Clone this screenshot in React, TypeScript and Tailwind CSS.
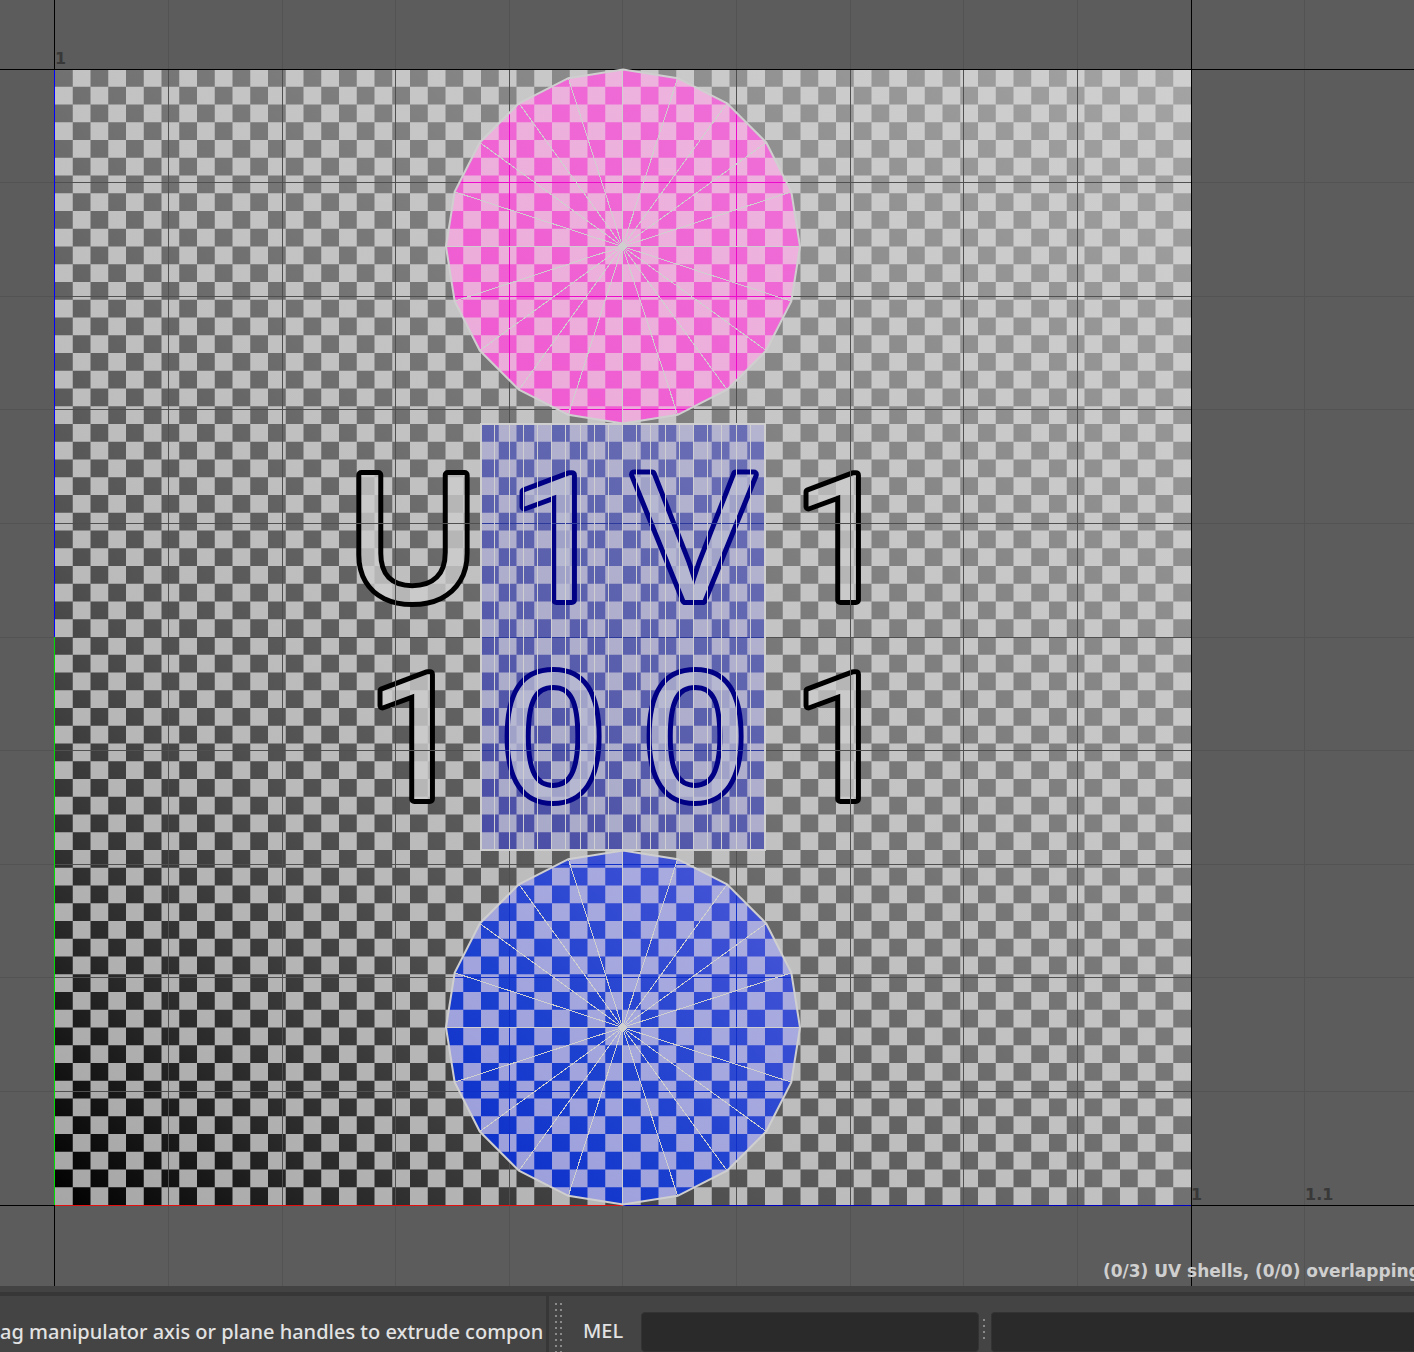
const LEFT = 55;
const TOP = 69;
const TILE = 1136;
const CELL = TILE / 64;

function checkerPath() {
  let d = '';
  for (let r = 0; r < 64; r++)
    for (let c = r % 2; c < 64; c += 2) {
      d += `M${LEFT + c * CELL} ${TOP + r * CELL}h${CELL}v${CELL}h${-CELL}z`;
    }
  return d;
}
const CHECKER = checkerPath();

const XS = Array.from({ length: 12 }, (_, i) => Math.floor(54.7 + i * 113.65) + 0.5);
const YS = Array.from({ length: 11 }, (_, i) => Math.floor(69.01 + i * 113.6) + 0.5);
const rows = YS.map((y) => `M0 ${y}H1414`).join('');
const gridLines = XS.map((x) => `M${x} 0V1286`).join('') + rows;

function ring(cx: number, cy: number, r: number) {
  return Array.from({ length: 20 }, (_, i) => {
    const a = (i * Math.PI) / 10;
    return [cx + r * Math.sin(a), cy - r * Math.cos(a)];
  });
}

// Brightness curve of the texture along its diagonal: [offset, weight].
const CURVE = [
  [0, 0],
  [0.05, 0.1],
  [0.128, 0.25],
  [0.29, 0.49],
  [0.5, 0.69],
  [0.75, 0.86],
  [1, 1],
];

function Gradient({ id, from, to }: { id: string; from: number[]; to: number[] }) {
  return (
    <linearGradient id={id} gradientUnits="userSpaceOnUse" x1={LEFT} y1={TOP + TILE} x2={LEFT + TILE} y2={TOP}>
      {CURVE.map(([t, w]) => (
        <stop
          key={t}
          offset={t}
          stopColor={`rgb(${from.map((v, i) => Math.max(0, Math.round(v + (to[i] - v) * w))).join(',')})`}
        />
      ))}
    </linearGradient>
  );
}

function Checks({ id, light, dark }: { id: string; light: string; dark: string }) {
  return (
    <pattern id={id} patternUnits="userSpaceOnUse" x={LEFT} y={TOP} width={CELL * 2} height={CELL * 2}>
      <rect width={CELL * 2} height={CELL * 2} fill={light} />
      <path d={`M0 0h${CELL}v${CELL * 2}h${CELL}v${-CELL}h${-CELL * 2}z`} fill={dark} />
    </pattern>
  );
}

const GLYPHS = [
  { ch: 'U', x: 413, y: 600 },
  { ch: '1', x: 559, y: 600, tinted: true },
  { ch: 'V', x: 694, y: 600, tinted: true },
  { ch: '1', x: 843, y: 600 },
  { ch: '1', x: 417, y: 799 },
  { ch: '0', x: 553, y: 799, tinted: true },
  { ch: '0', x: 695, y: 799, tinted: true },
  { ch: '1', x: 843, y: 799 },
];

function Layer({ clip, light, dark, grid }: { clip?: string; light: string; dark: string; grid?: string }) {
  return (
    <g clipPath={clip ? `url(#${clip})` : undefined}>
      <rect x={LEFT} y={TOP} width={TILE} height={TILE} fill={`url(#${light})`} />
      <path d={CHECKER} fill={`url(#${dark})`} />
      {grid && <path d={gridLines} stroke={grid} />}
    </g>
  );
}

function Disc({ id, cy, light, dark, grid }: { id: string; cy: number; light: string; dark: string; grid: string }) {
  const pts = ring(623, cy, 177);
  const points = pts.map((p) => p.join(',')).join(' ');
  return (
    <g>
      <clipPath id={id}>
        <polygon points={points} />
      </clipPath>
      <Layer clip={id} light={light} dark={dark} grid={grid} />
      <path d={pts.map((p) => `M622.5 ${cy}L${p[0]} ${p[1]}`).join('')} stroke="#cfcfcf" shapeRendering="crispEdges" />
      <polygon points={points} fill="none" stroke="#cfcfcf" strokeWidth="2" />
      <circle cx="623" cy={cy} r="3" fill="#cfcfcf" />
    </g>
  );
}

function UvCanvas() {
  return (
    <svg viewBox="0 0 1414 1286" className="block h-auto w-full" role="img" aria-label="UV layout">
      <defs>
        <Gradient id="light" from={[166, 166, 166]} to={[207, 207, 207]} />
        <Gradient id="dark" from={[0, 0, 0]} to={[164, 164, 164]} />
        <Gradient id="pinkLight" from={[235, 135, 206]} to={[237, 185, 224]} />
        <Gradient id="pinkDark" from={[242, 0, 186]} to={[239, 124, 218]} />
        <Gradient id="blueLight" from={[135, 140, 212]} to={[190, 190, 230]} />
        <Gradient id="blueDark" from={[-110, 0, 186]} to={[170, 130, 228]} />
        <Gradient id="boxLight" from={[140, 141, 180]} to={[190, 190, 216]} />
        <Gradient id="boxDark" from={[0, 0, 130]} to={[134, 140, 194]} />
        <Checks id="glyphGray" light="#cacaca" dark="#b6b6b6" />
        <Checks id="glyphBlue" light="#b6b7d0" dark="#a1a2c8" />
        <clipPath id="box">
          <rect x="481" y="424" width="284" height="426" />
        </clipPath>
      </defs>
      <rect width="1414" height="1286" fill="#5c5c5c" />
      <path d={gridLines} stroke="#535353" />
      <Layer light="light" dark="dark" />
      <Layer clip="box" light="boxLight" dark="boxDark" />
      <g strokeWidth="10" strokeLinejoin="round" paintOrder="stroke">
        {GLYPHS.map((g, i) => (
          <text
            key={i}
            x={g.x}
            y={g.y}
            textAnchor="middle"
            fill={g.tinted ? 'url(#glyphBlue)' : 'url(#glyphGray)'}
            stroke={g.tinted ? '#000084' : '#000'}
            className={g.ch === '1' ? "font-['Roboto'] text-[174px]" : "font-['Liberation_Sans'] text-[182px]"}
          >
            {g.ch}
          </text>
        ))}
      </g>
      <path
        d={XS.slice(1, 10).map((x) => `M${x} 70V1205`).join('') + YS.slice(1, 10).map((y) => `M55 ${y}H1191`).join('')}
        stroke="#505050"
      />
      <g clipPath="url(#box)">
        <path d={XS.slice(4, 7).map((x) => `M${x} 424V850`).join('')} stroke="#8286b8" />
        <path d={rows} stroke="#2c3a9c" />
        <path
          d={Array.from({ length: 19 }, (_, i) => `M${Math.floor(480.8 + (i + 1) * 14.18) + 0.5} 424V850`).join('')}
          stroke="#cfcfd2"
        />
      </g>
      <rect x="481" y="424" width="284" height="426" fill="none" stroke="#cfcfcf" strokeWidth="2" />
      <path d="M54.5 0V1286M1191.5 0V1286M0 69.5H1414M0 1205.5H1414" stroke="#000" />
      <path d="M54.5 70V637" stroke="#0000ff" />
      <path d="M54.5 637V1205" stroke="#00dd00" />
      <path d="M55 1205.5H623" stroke="#e01010" />
      <path d="M623 1205.5H1191" stroke="#0000c0" />
      <Disc id="discTop" cy={246.5} light="pinkLight" dark="pinkDark" grid="#ee0acb" />
      <Disc id="discBottom" cy={1027.5} light="blueLight" dark="blueDark" grid="#1030c8" />
      <g fill="#383838" className="font-['DejaVu_Sans'] text-[16px] font-bold">
        <text x="55" y="64">1</text>
        <text x="1191" y="1200">1</text>
        <text x="1305" y="1200">1.1</text>
      </g>
    </svg>
  );
}

function Grip({ cols, rows }: { cols: number[]; rows: number[] }) {
  return (
    <div className="flex gap-[3px]" aria-hidden="true">
      {cols.map((c) => (
        <div key={c} className="flex flex-col gap-1">
          {rows.map((r) => (
            <i key={r} className="block size-0.5 bg-[#8a8a8a]" />
          ))}
        </div>
      ))}
    </div>
  );
}

export default function App() {
  return (
    <main className="flex w-full flex-col overflow-hidden bg-[#444444] font-['Noto_Sans',sans-serif]">
      <section className="relative overflow-hidden">
        <UvCanvas />
        <p className="absolute bottom-[3px] left-[78%] font-['DejaVu_Sans'] text-[17px] leading-6 font-bold whitespace-nowrap text-[#cfcfcf]">
          (0/3) UV shells, (0/0) overlapping
        </p>
      </section>
      <footer>
        <div className="h-1.5 bg-[#434343]" />
        <div className="h-1 bg-[#373737]" />
        <div className="flex h-14 overflow-hidden bg-[#444444] text-[20px] font-medium text-[#e2e2e2]">
          <p className="w-[549px] shrink-0 overflow-hidden border-r-[3px] border-[#373737] pt-[22px] leading-7 whitespace-nowrap">
            ag manipulator axis or plane handles to extrude compon
          </p>
          <div className="w-[34px] shrink-0 overflow-hidden pt-[7px] pl-1.5">
            <Grip cols={[0, 1]} rows={[0, 1, 2, 3, 4, 5, 6, 7, 8]} />
          </div>
          <label htmlFor="mel" className="w-[58px] shrink-0 pt-[21px] leading-7">
            MEL
          </label>
          <input
            id="mel"
            className="mt-4 h-10 w-[338px] shrink-0 rounded-sm border border-[#333333] bg-[#2a2a2a] px-2 outline-none"
          />
          <div className="w-3 shrink-0 pt-[23px] pl-1">
            <Grip cols={[0]} rows={[0, 1, 2, 3]} />
          </div>
          <input
            aria-label="Command output"
            readOnly
            className="mt-4 h-10 min-w-0 flex-1 rounded-l-sm border border-r-0 border-[#333333] bg-[#2a2a2a] px-2 outline-none"
          />
        </div>
      </footer>
    </main>
  );
}
